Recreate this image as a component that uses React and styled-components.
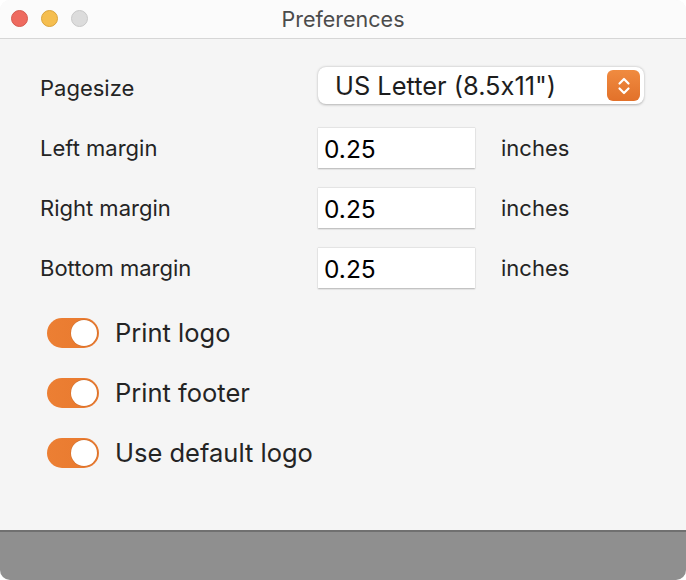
import React from "react";
import styled, { createGlobalStyle } from "styled-components";

const Global = createGlobalStyle`
  html, body { margin: 0; padding: 0; background: #ffffff; }
  body {
    font-family: Inter, "Noto Sans", "Liberation Sans", sans-serif;
    font-feature-settings: "calt" 0;
  }
  #root { width: 686px; height: 580px; }
`;

const Window = styled.div`
  width: 686px;
  height: 580px;
  display: flex;
  flex-direction: column;
  background: #f5f5f5;
  border-radius: 10px;
  overflow: hidden;
  box-sizing: border-box;
`;

const TitleBar = styled.div`
  position: relative;
  height: 38px;
  flex: none;
  display: flex;
  align-items: center;
  justify-content: center;
  background: #fbfbfb;
  border-bottom: 1px solid #d6d6d6;
`;

const Lights = styled.div`
  position: absolute;
  left: 11px;
  top: 10px;
  display: flex;
  gap: 13px;
`;

const Light = styled.span`
  width: 17px;
  height: 17px;
  border-radius: 50%;
  box-sizing: border-box;
  background: ${(p) => p.$bg};
  border: 0.5px solid ${(p) => p.$border};
`;

const Title = styled.div`
  font-size: 21.5px;
  color: #4b4b4b;
`;

const Content = styled.div`
  flex: 1;
  display: flex;
  flex-direction: column;
  padding: 28px 0 0 40px;
`;

const FormRow = styled.div`
  display: flex;
  align-items: center;
  margin-bottom: ${(p) => p.$mb}px;
`;

const Label = styled.div`
  width: 278px;
  flex: none;
  font-size: 22px;
  color: #242424;
  margin-top: ${(p) => p.$mt || 0}px;
`;

const Select = styled.div`
  width: 326px;
  height: 37px;
  box-sizing: border-box;
  display: flex;
  align-items: center;
  justify-content: space-between;
  background: #ffffff;
  border-radius: 8px;
  box-shadow: 0 0.5px 2.5px rgba(0, 0, 0, 0.28);
  padding: 0 4px 0 17px;
  font-size: 25.4px;
  color: #1d1d1d;
`;

const Stepper = styled.div`
  width: 33px;
  height: 31px;
  border-radius: 6px;
  background: linear-gradient(#f08b40, #e2712a);
  display: flex;
  align-items: center;
  justify-content: center;
`;

const Input = styled.div`
  width: 157px;
  height: 41px;
  box-sizing: border-box;
  background: #ffffff;
  border-top: 1px solid #e4e4e4;
  box-shadow: 0 1px 1.5px rgba(0, 0, 0, 0.28);
  display: flex;
  align-items: center;
  padding: 2px 0 0 6px;
  font-size: 24.5px;
  color: #000000;
`;

const Unit = styled.div`
  margin-left: 26px;
  font-size: 22px;
  color: #242424;
`;

const ToggleList = styled.div`
  display: flex;
  flex-direction: column;
  gap: 30px;
  margin-top: 30px;
  padding-left: 7px;
`;

const ToggleRow = styled.div`
  display: flex;
  align-items: center;
  gap: 16px;
  height: 30px;
`;

const Track = styled.div`
  width: 52px;
  height: 30px;
  flex: none;
  border-radius: 15px;
  box-sizing: border-box;
  background: linear-gradient(90deg, #ec7f33, #e8792f);
  display: flex;
  align-items: center;
  justify-content: ${(p) => (p.$on ? "flex-end" : "flex-start")};
  padding: 2px;
`;

const Knob = styled.div`
  width: 26px;
  height: 26px;
  border-radius: 50%;
  background: #ffffff;
  box-shadow: 0 0 0 0.5px rgba(160, 80, 20, 0.4);
`;

const ToggleLabel = styled.div`
  font-size: 25.5px;
  line-height: 30px;
  color: #242424;
`;

const BottomBar = styled.div`
  height: 48px;
  flex: none;
  background: #8f8f8f;
  border-top: 2px solid #707070;
`;

const Chevrons = () => (
  <svg width="16" height="24" viewBox="0 0 16 24" fill="none">
    <path d="M3.5 9.5 L8 5 L12.5 9.5" stroke="#fff" strokeWidth="2.2" strokeLinecap="round" strokeLinejoin="round" />
    <path d="M3.5 14.5 L8 19 L12.5 14.5" stroke="#fff" strokeWidth="2.2" strokeLinecap="round" strokeLinejoin="round" />
  </svg>
);

const margins = ["Left margin", "Right margin", "Bottom margin"];
const toggles = ["Print logo", "Print footer", "Use default logo"];

export default function App() {
  return (
    <>
      <Global />
      <Window>
        <TitleBar>
          <Lights>
            <Light $bg="#ee6a5f" $border="#d55a4f" />
            <Light $bg="#f5be4f" $border="#d9a33c" />
            <Light $bg="#dcdcdc" $border="#c8c8c8" />
          </Lights>
          <Title>Preferences</Title>
        </TitleBar>
        <Content>
          <FormRow $mb={23}>
            <Label $mt={4}>Pagesize</Label>
            <Select>
              <span>US Letter (8.5x11")</span>
              <Stepper>
                <Chevrons />
              </Stepper>
            </Select>
          </FormRow>
          {margins.map((m, i) => (
            <FormRow key={m} $mb={i < margins.length - 1 ? 19 : 0}>
              <Label>{m}</Label>
              <Input>0.25</Input>
              <Unit>inches</Unit>
            </FormRow>
          ))}
          <ToggleList>
            {toggles.map((t) => (
              <ToggleRow key={t}>
                <Track $on>
                  <Knob />
                </Track>
                <ToggleLabel>{t}</ToggleLabel>
              </ToggleRow>
            ))}
          </ToggleList>
        </Content>
        <BottomBar />
      </Window>
    </>
  );
}
